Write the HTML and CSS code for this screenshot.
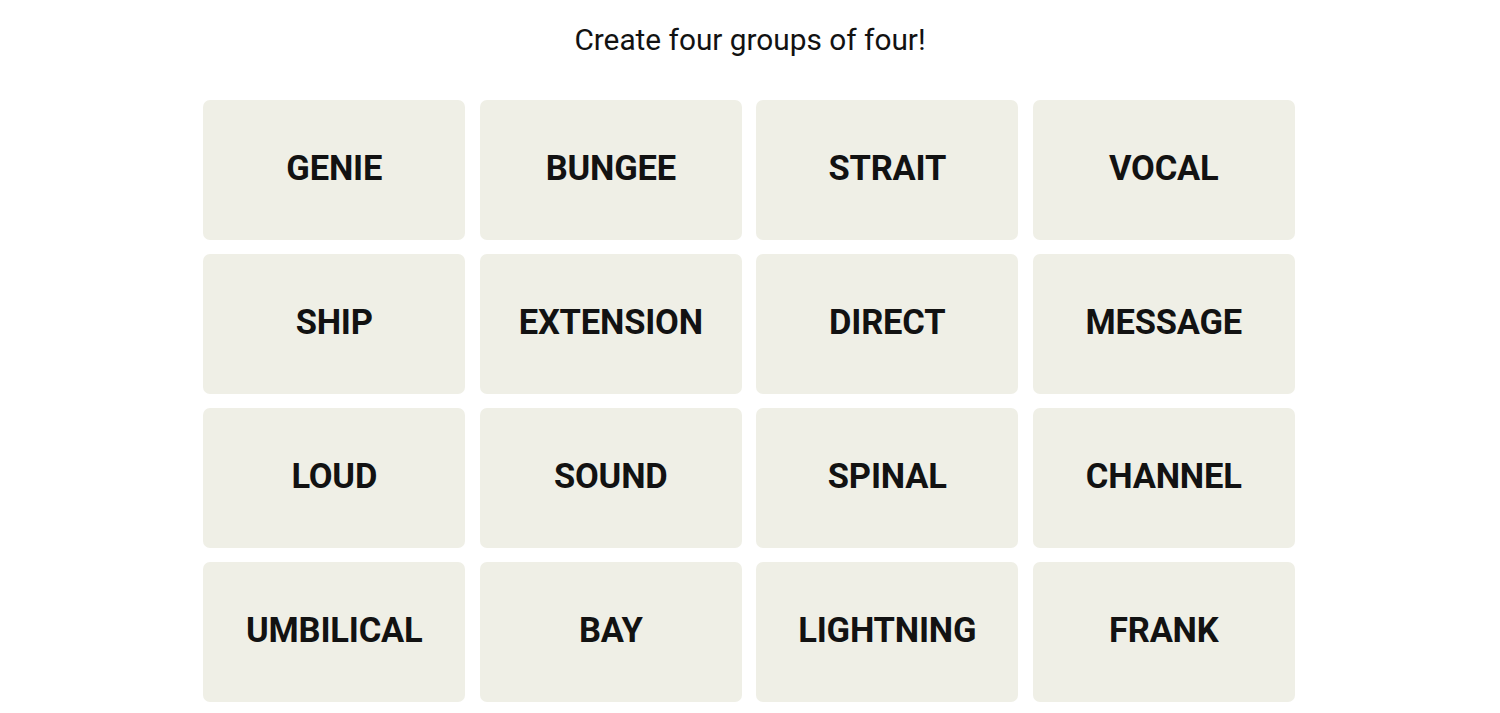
FILE: index.html
```html
<!DOCTYPE html>
<html lang="en">
<head>
<meta charset="utf-8">
<title>Connections</title>
<link rel="stylesheet" href="styles.css">
</head>
<body>
<main class="game">
  <p class="prompt">Create four groups of four!</p>
  <div class="board">
    <button class="tile">GENIE</button>
    <button class="tile">BUNGEE</button>
    <button class="tile">STRAIT</button>
    <button class="tile">VOCAL</button>
    <button class="tile">SHIP</button>
    <button class="tile">EXTENSION</button>
    <button class="tile">DIRECT</button>
    <button class="tile">MESSAGE</button>
    <button class="tile">LOUD</button>
    <button class="tile">SOUND</button>
    <button class="tile">SPINAL</button>
    <button class="tile">CHANNEL</button>
    <button class="tile">UMBILICAL</button>
    <button class="tile">BAY</button>
    <button class="tile">LIGHTNING</button>
    <button class="tile">FRANK</button>
  </div>
</main>
</body>
</html>
```
FILE: styles.css
```css
html, body {
  margin: 0;
  padding: 0;
  background: #ffffff;
  color: #121212;
  font-family: Roboto, "Liberation Sans", sans-serif;
}
.game {
  display: flex;
  flex-direction: column;
  align-items: center;
  padding-top: 20px;
}
.prompt {
  margin: 0;
  font-size: 29.8px;
  font-weight: 400;
  line-height: 40px;
  text-align: center;
}
.board {
  display: grid;
  grid-template-columns: repeat(4, 262px);
  grid-auto-rows: 140px;
  column-gap: 14.5px;
  row-gap: 14px;
  margin-top: 40px;
  margin-right: 2px;
}
.tile {
  display: flex;
  align-items: center;
  justify-content: center;
  border: none;
  border-radius: 7px;
  background: #efefe6;
  color: #121212;
  font-family: Roboto, "Liberation Sans", sans-serif;
  font-size: 34.5px;
  font-weight: 700;
  letter-spacing: -0.2px;
  padding: 0 0 5px 0;
  margin: 0;
}
```
